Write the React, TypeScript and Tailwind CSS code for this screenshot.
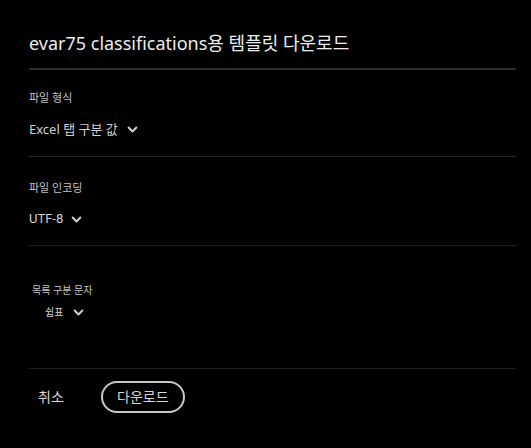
import React from 'react';

const font = { fontFamily: '"Noto Sans", "Noto Sans CJK KR", sans-serif' };

function Chevron({ className = '' }: { className?: string }) {
  return (
    <svg viewBox="0 0 10 10" className={className} fill="none" stroke="currentColor" strokeWidth="1.8" strokeLinecap="round" strokeLinejoin="round">
      <path d="M1.5 3.2 5 6.8 8.5 3.2" />
    </svg>
  );
}

export default function App() {
  return (
    <div className="w-[531px] h-[448px] bg-black text-[#d8d8d8] overflow-hidden" style={font}>
      <div className="pl-[29px] pr-[15px]">
        {/* Header */}
        <h1 className="pt-[31px] text-[18px] leading-[24px] font-normal text-[#ececec]">
          evar75 classifications용 템플릿 다운로드
        </h1>
        <div className="mt-[13px] h-[2px] bg-[#2c2c2c]" />

        {/* 파일 형식 */}
        <div className="pt-[20px] text-[11px] leading-[16px] text-[#c4c4c4]">파일 형식</div>
        <div className="mt-[14px] flex items-center gap-[9px] text-[13px] leading-[18px] text-[#d0d0d0]">
          <span>Excel 탭 구분 값</span>
          <Chevron className="w-[11px] h-[11px]" />
        </div>
        <div className="mt-[18px] h-px bg-[#222]" />

        {/* 파일 인코딩 */}
        <div className="pt-[23px] text-[11px] leading-[16px] text-[#c4c4c4]">파일 인코딩</div>
        <div className="mt-[14px] flex items-center gap-[8px] text-[13px] leading-[18px] text-[#d0d0d0]">
          <span style={{ fontFamily: 'Roboto, "Noto Sans CJK KR", sans-serif' }}>UTF-8</span>
          <Chevron className="w-[11px] h-[11px]" />
        </div>
        <div className="mt-[17px] h-px bg-[#222]" />

        {/* 목록 구분 문자 */}
        <div className="pt-[37px] pl-[3px] text-[10px] leading-[14px] text-[#c4c4c4]">목록 구분 문자</div>
        <div className="mt-[8px] pl-[16px] flex items-center gap-[10px] text-[10px] leading-[14px] text-[#d0d0d0]">
          <span>쉼표</span>
          <Chevron className="w-[11px] h-[11px]" />
        </div>
        <div className="mt-[49px] h-px bg-[#1e1e1e]" />

        {/* Footer */}
        <div className="mt-[12px] flex items-center">
          <button className="ml-[9px] text-[14px] leading-[20px] text-[#d8d8d8]">취소</button>
          <button className="ml-[37px] h-[32px] w-[84px] rounded-full border-2 border-[#c8c8c8] text-[14px] leading-[20px] text-[#d8d8d8]">
            다운로드
          </button>
        </div>
      </div>
    </div>
  );
}
